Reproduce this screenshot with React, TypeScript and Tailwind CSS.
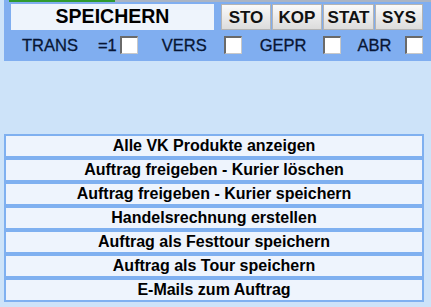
import React from "react";

function Box() {
  return (
    <div className="w-[18px] h-[18px] bg-white border-t-[2px] border-l-[2px] border-b border-r border-t-[#6a6a6a] border-l-[#6a6a6a] border-b-[#c8c8c8] border-r-[#c8c8c8] shrink-0" />
  );
}

const rows = [
  "Alle VK Produkte anzeigen",
  "Auftrag freigeben - Kurier löschen",
  "Auftrag freigeben - Kurier speichern",
  "Handelsrechnung erstellen",
  "Auftrag als Festtour speichern",
  "Auftrag als Tour speichern",
  "E-Mails zum Auftrag",
];

const btns: { t: string; w: string }[] = [
  { t: "STO", w: "w-[50px]" },
  { t: "KOP", w: "w-[50px]" },
  { t: "STAT", w: "w-[51px]" },
  { t: "SYS", w: "w-[48px]" },
];

export default function App() {
  return (
    <div className="w-[431px] h-[307px] bg-[#cde3f9] font-['Liberation_Sans',Arial,sans-serif] overflow-hidden">
      <div className="ml-[4px] h-[61px] bg-[#80aef0] flex flex-col">
        <div className="flex h-[2px]">
          <div className="w-[5px] bg-[#80aef0]" />
          <div className="w-[106px] bg-[#2f9a30]" />
          <div className="flex-1 bg-[#aab4c4]" />
        </div>
        <div className="flex mt-[2px] h-[26px]">
          <div className="ml-[7px] w-[203px] bg-[#eef4fc] flex items-center justify-center text-[19.5px] font-bold text-black leading-none">
            SPEICHERN
          </div>
          <div className="ml-[7px] flex gap-[1px]">
            {btns.map((b) => (
              <div
                key={b.t}
                className={`${b.w} h-[26px] border border-[#b4b4b4] bg-gradient-to-b from-[#fafafa] to-[#dcdcdc] flex items-center justify-center text-[17px] font-bold text-[#111] leading-none`}
              >
                {b.t}
              </div>
            ))}
          </div>
        </div>
        <div className="flex items-center mt-[3px] h-[24px] text-[16.5px] text-[#081634] leading-none [-webkit-text-stroke:0.3px_#081634]">
          <span className="ml-[18px]">TRANS</span>
          <span className="ml-[20px]">=1</span>
          <div className="ml-[3px]"><Box /></div>
          <span className="ml-[24px]">VERS</span>
          <div className="ml-[17px]"><Box /></div>
          <span className="ml-[18px]">GEPR</span>
          <div className="ml-[17px]"><Box /></div>
          <span className="ml-[16px]">ABR</span>
          <div className="ml-[14px]"><Box /></div>
        </div>
      </div>
      <div className="mt-[73px] ml-[4px] w-[420px] flex flex-col">
        {rows.map((r) => (
          <div
            key={r}
            className="h-[24px] border-2 border-[#7fb0f0] bg-[#eef4fd] flex items-center justify-center text-[16px] font-bold text-black leading-none"
          >
            {r}
          </div>
        ))}
      </div>
    </div>
  );
}
